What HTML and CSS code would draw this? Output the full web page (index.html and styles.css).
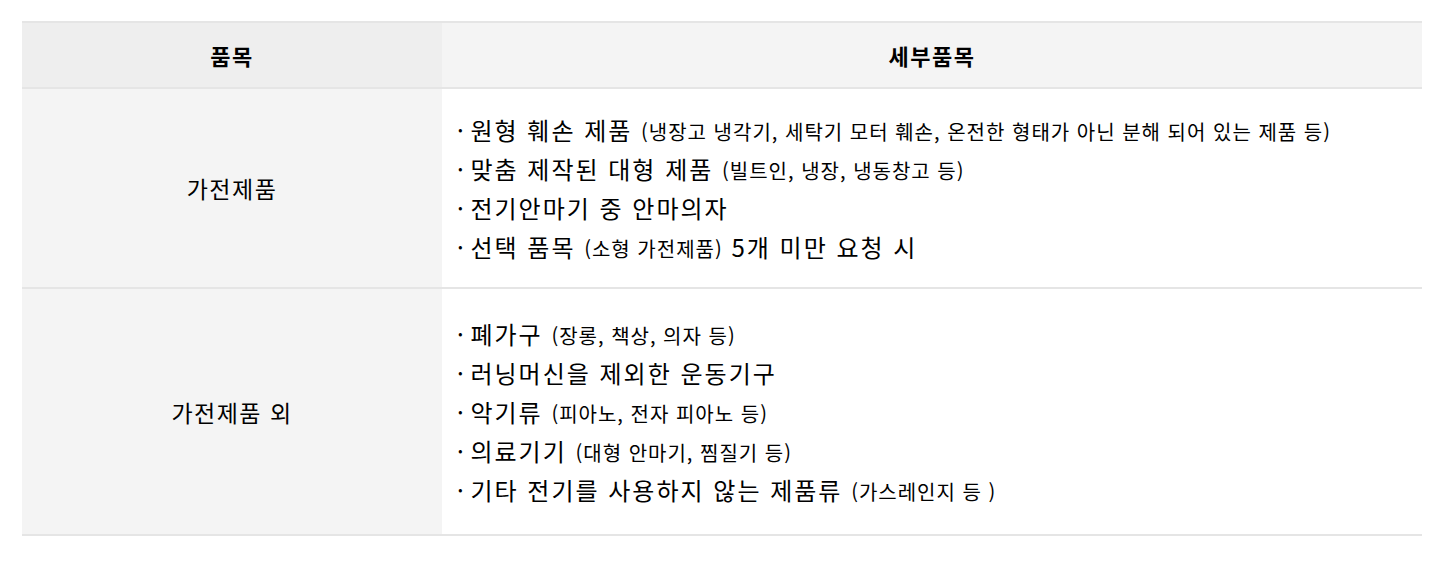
FILE: index.html
```html
<!DOCTYPE html>
<html lang="ko">
<head>
  <meta charset="UTF-8" />
  <title>수거 제외 품목</title>
  <link rel="stylesheet" href="styles.css">
</head>
<body>

<div class="wrap">
  <table class="items">
    <thead>
      <tr>
        <th class="col-kind">품목</th>
        <th class="col-detail">세부품목</th>
      </tr>
    </thead>
    <tbody>
      <tr class="row-a">
        <td class="kind">가전제품</td>
        <td class="detail">
          <div class="line"><span class="dot">· </span>원형 훼손 제품 <span class="sub">(냉장고 냉각기, 세탁기 모터 훼손, 온전한 형태가 아닌 분해 되어 있는 제품 등)</span></div>
          <div class="line"><span class="dot">· </span>맞춤 제작된 대형 제품 <span class="sub">(빌트인, 냉장, 냉동창고 등)</span></div>
          <div class="line"><span class="dot">· </span>전기안마기 중 안마의자</div>
          <div class="line"><span class="dot">· </span>선택 품목 <span class="sub">(소형 가전제품)</span> 5개 미만 요청 시</div>
        </td>
      </tr>
      <tr class="row-b">
        <td class="kind">가전제품 외</td>
        <td class="detail">
          <div class="line"><span class="dot">· </span>폐가구 <span class="sub">(장롱, 책상, 의자 등)</span></div>
          <div class="line"><span class="dot">· </span>러닝머신을 제외한 운동기구</div>
          <div class="line"><span class="dot">· </span>악기류 <span class="sub">(피아노, 전자 피아노 등)</span></div>
          <div class="line"><span class="dot">· </span>의료기기 <span class="sub">(대형 안마기, 찜질기 등)</span></div>
          <div class="line"><span class="dot">· </span>기타 전기를 사용하지 않는 제품류 <span class="sub">(가스레인지 등 )</span></div>
        </td>
      </tr>
    </tbody>
  </table>
</div>

</body>
</html>
```

FILE: styles.css
```css
body {
  margin: 0;
  background: #fff;
  color: #000;
  font-family: "Noto Sans CJK KR", "Noto Sans", sans-serif;
}

.wrap {
  padding: 21px 20px 0 22px;
}

.items {
  width: 100%;
  border-collapse: collapse;
  border-top: 2px solid #e5e5e5;
}

.items th {
  height: 64px;
  padding: 0;
  font-size: 22px;
  font-weight: bold;
  letter-spacing: 1.5px;
  color: #000;
  border-bottom: 2px solid #e5e5e5;
}

.col-kind {
  width: 420px;
  background: #eeeeee;
}

.col-detail {
  background: #f4f4f4;
}

.items td {
  border-bottom: 2px solid #e5e5e5;
}

.kind {
  background: #f4f4f4;
  text-align: center;
  font-size: 23px;
  letter-spacing: 1.5px;
}

.detail {
  padding: 0 0 0 15px;
  background: #fff;
}

.row-a .detail {
  padding-top: 21px;
  padding-bottom: 21px;
}

.row-b .detail {
  padding-top: 25px;
  padding-bottom: 25px;
}

.line {
  font-size: 24px;
  letter-spacing: 2px;
  line-height: 39px;
  height: 39px;
  white-space: nowrap;
}

.dot {
  letter-spacing: 0;
}

.sub {
  font-size: 20px;
  letter-spacing: 1px;
}
```
